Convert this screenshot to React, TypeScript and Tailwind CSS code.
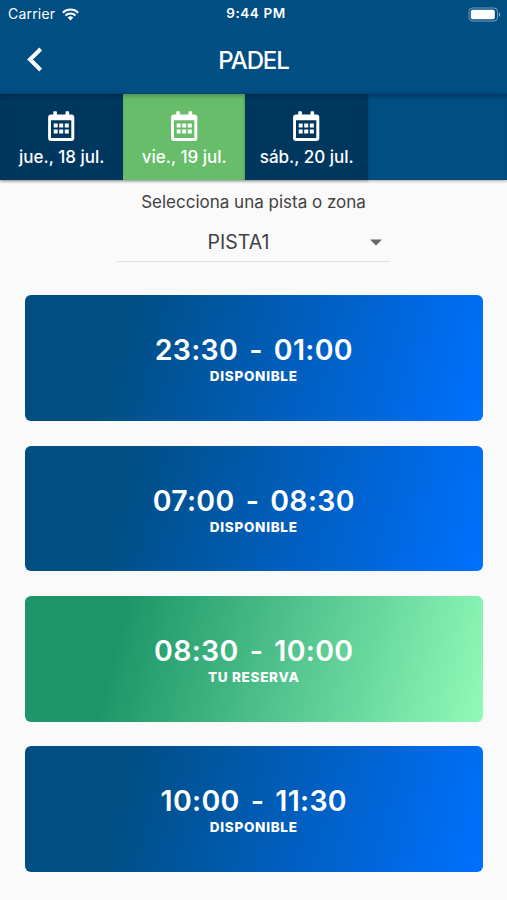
import React, { useState } from 'react';
import clsx from 'clsx';

interface Slot {
  time: string;
  mine?: boolean;
}

const DAYS = ['jue., 18 jul.', 'vie., 19 jul.', 'sáb., 20 jul.'];

const SLOTS: Slot[] = [
  { time: '23:30 - 01:00' },
  { time: '07:00 - 08:30' },
  { time: '08:30 - 10:00', mine: true },
  { time: '10:00 - 11:30' },
];

const CalendarIcon = () => (
  <svg width="27" height="30" viewBox="0 0 27 30" fill="currentColor">
    <path
      fillRule="evenodd"
      d="M5.3 1a.8.8 0 0 1 .8-.8h2a.8.8 0 0 1 .8.8v2.6h8.6V1a.8.8 0 0 1 .8-.8h2a.8.8 0 0 1 .8.8v2.6h2.3a2.9 2.9 0 0 1 2.9 2.9v20.6a2.9 2.9 0 0 1-2.9 2.9H3a2.9 2.9 0 0 1-2.9-2.9V6.5A2.9 2.9 0 0 1 3 3.6h2.3zM3 9.3v17.2a.5.5 0 0 0 .5.5h19.3a.5.5 0 0 0 .5-.5V9.3z"
    />
    <path d="M5.7 12.6h4v4h-4zM11.2 12.6h4v4h-4zM16.8 12.6h4v4h-4zM5.7 18.4h4v4h-4zM11.2 18.4h4v4h-4zM16.8 18.4h4v4h-4z" />
  </svg>
);

const WifiIcon = () => (
  <svg width="17" height="13" viewBox="0 0 17 13" fill="none" stroke="currentColor" strokeWidth="2.1">
    <path d="M.8 4.7a11 11 0 0 1 15.4 0" />
    <path d="M3.5 7.5a7.1 7.1 0 0 1 10 0" />
    <path d="M8.5 12.4 5.7 9.6a4 4 0 0 1 5.6 0z" fill="currentColor" stroke="none" />
  </svg>
);

const BatteryIcon = () => (
  <svg width="33" height="15" viewBox="0 0 33 15">
    <rect x="1" y="1" width="28.5" height="13" rx="3.5" fill="none" stroke="#fff" strokeOpacity="0.45" />
    <rect x="2.8" y="2.8" width="24" height="9.4" rx="1.6" fill="#fff" />
    <path d="M31 5.3c1.8.8 1.8 3.6 0 4.4z" fill="#fff" fillOpacity="0.5" />
  </svg>
);

const StatusBar = () => (
  <div className="grid h-7 grid-cols-3 items-center pl-2 pr-[6px] text-white">
    <div className="flex items-center gap-[7px] text-[14px] leading-none">
      <span className="tracking-[0.2px]">Carrier</span>
      <WifiIcon />
    </div>
    <span className="pl-[3px] text-center text-[13.5px] font-semibold leading-none tracking-[0.6px]">9:44 PM</span>
    <div className="flex justify-end">
      <BatteryIcon />
    </div>
  </div>
);

const SlotCard: React.FC<{ slot: Slot }> = ({ slot }) => (
  <button
    type="button"
    className={clsx(
      'flex h-[125.75px] w-full flex-col items-center rounded-[6px] pt-[37px] text-white',
      slot.mine
        ? 'bg-[linear-gradient(105deg,#1c9669_21%,#92fab8_100%)]'
        : 'bg-[linear-gradient(105deg,#004e82_21%,#0070ff_100%)]',
    )}
  >
    <span className="whitespace-nowrap text-[28.5px] font-semibold leading-9 tracking-[0.3px] [word-spacing:3.6px]">
      {slot.time}
    </span>
    <span className="text-[13.5px] font-extrabold leading-4 tracking-[0.7px]">
      {slot.mine ? 'TU RESERVA' : 'DISPONIBLE'}
    </span>
  </button>
);

const App: React.FC = () => {
  const [selectedDay, setSelectedDay] = useState(1);

  return (
    <div className="flex h-[900px] w-full flex-col overflow-hidden bg-[#fafafa] font-['Inter',sans-serif]">
      <header className="h-[94px] shrink-0 bg-[#004e82]">
        <StatusBar />
        <div className="grid h-16 grid-cols-[60px_1fr_60px] items-center text-white">
          <button type="button" aria-label="Volver" className="pb-px pl-[27px]">
            <svg width="16" height="25" viewBox="0 0 16 25" fill="none" stroke="currentColor" strokeWidth="4">
              <path d="M13.7 2 3 12.5 13.7 23" />
            </svg>
          </button>
          <h1 className="pt-px text-center text-[24px] font-medium leading-none tracking-[-1.1px]">PADEL</h1>
        </div>
      </header>

      <nav className="flex h-[86px] shrink-0 bg-[#004e82] shadow-[0_1px_3px_rgba(0,0,0,0.35),inset_0_4px_4px_-2px_rgba(0,0,0,0.3)]">
        {DAYS.map((day, index) => (
          <button
            key={day}
            type="button"
            onClick={() => setSelectedDay(index)}
            className={clsx(
              'flex w-[122.5px] flex-col items-center pl-px pt-[17px] text-white shadow-[0_1px_3px_rgba(0,0,0,0.2),inset_0_4px_4px_-2px_rgba(0,0,0,0.25)]',
              index === selectedDay ? 'bg-[#68bd6b]' : 'bg-[#00375f]',
            )}
          >
            <CalendarIcon />
            <span className="mt-1 whitespace-nowrap text-[17px] font-medium leading-6">{day}</span>
          </button>
        ))}
      </nav>

      <section className="flex h-[115px] shrink-0 flex-col items-center pt-[10px] text-[#414141]">
        <p className="text-[17px] leading-6">Selecciona una pista o zona</p>
        <button
          type="button"
          className="mt-[9px] flex h-[39px] w-[273px] items-center border-b border-[#dfdfdf] pr-[7px]"
        >
          <span className="flex-1 pr-[9px] pt-px text-center text-[19.5px]">PISTA1</span>
          <svg width="14" height="7" viewBox="0 0 14 7" fill="#666">
            <path d="M1 .5h12L7 6.5z" />
          </svg>
        </button>
      </section>

      <main className="flex flex-col gap-[24.5px] pl-[25px] pr-[24.5px] pt-[0.25px]">
        {SLOTS.map((slot) => (
          <SlotCard key={slot.time} slot={slot} />
        ))}
      </main>
    </div>
  );
};

export default App;
